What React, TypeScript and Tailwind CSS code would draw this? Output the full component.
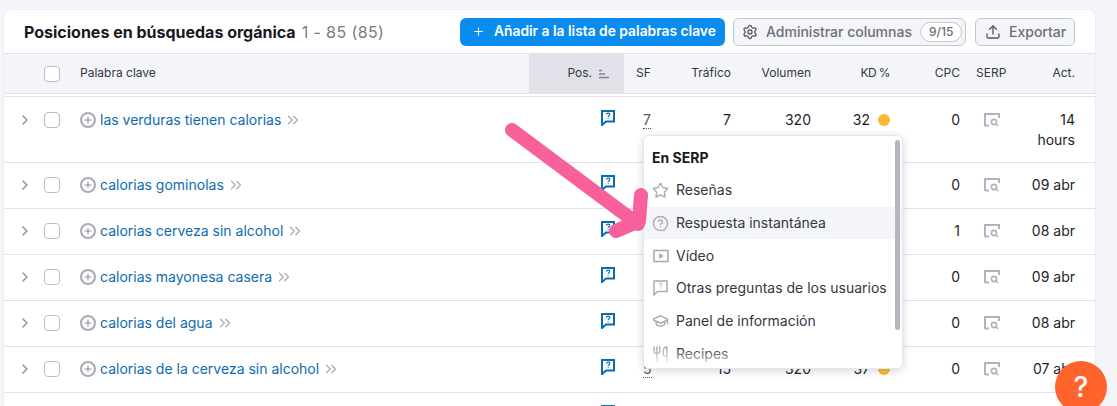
import React from "react";
import {
  ChevronRight,
  ChevronsRight,
  CircleHelp,
  GraduationCap,
  Plus,
  Settings,
  Star,
  Upload,
  Utensils,
} from "lucide-react";

type Row = {
  keyword?: string;
  sf?: string;
  traffic?: string;
  volume?: string;
  kd?: string;
  cpc?: string;
  date?: string;
};

const rows: Row[] = [
  { keyword: "las verduras tienen calorias", sf: "7", traffic: "7", volume: "320", kd: "32", cpc: "0", date: "14 hours" },
  { keyword: "calorias gominolas", cpc: "0", date: "09 abr" },
  { keyword: "calorias cerveza sin alcohol", cpc: "1", date: "08 abr" },
  { keyword: "calorias mayonesa casera", cpc: "0", date: "09 abr" },
  { keyword: "calorias del agua", cpc: "0", date: "08 abr" },
  { keyword: "calorias de la cerveza sin alcohol", sf: "5", traffic: "15", volume: "320", kd: "37", cpc: "0", date: "07 abr" },
  {},
];

const gridCols = "grid grid-cols-[76px_449px_95px_51px_56px_80px_79px_70px_56px_59px_20px]";

function Checkbox() {
  return <span className="block h-4 w-4 rounded-[4px] border border-[#b9bcc6] bg-white" />;
}

// Blue speech bubble with a question mark, used in the Pos. column
function BubbleIcon() {
  return (
    <svg width="14" height="16" viewBox="0 0 14 16" fill="none">
      <path d="M1 1h12v10.5H5L1 15z" stroke="#0a6ab4" strokeWidth="2" strokeLinejoin="miter" fill="#fff" />
      <path d="M5.3 4.6c.2-1 .9-1.5 1.8-1.5s1.7.6 1.7 1.4c0 1.2-1.7 1.3-1.7 2.4M7.1 8.2v1" stroke="#0a6ab4" strokeWidth="1.1" />
    </svg>
  );
}

function SerpIcon() {
  return (
    <svg width="16" height="14" viewBox="0 0 16 14" fill="none" stroke="#b0b3bd">
      <path d="M1 13V1h14v4" strokeWidth="2" />
      <path d="M1 12.5h4" strokeWidth="2" />
      <circle cx="10" cy="9" r="2.6" strokeWidth="1.6" />
      <path d="M12 11l2 2" strokeWidth="1.6" />
    </svg>
  );
}

function VideoIcon() {
  return (
    <svg width="16" height="14" viewBox="0 0 16 14" fill="none">
      <rect x="1" y="1.5" width="14" height="11" stroke="#a8abb5" strokeWidth="1.6" />
      <path d="M6 4.2v5.6L11 7z" fill="#a8abb5" />
    </svg>
  );
}

function QuestionsIcon() {
  return (
    <svg width="15" height="16" viewBox="0 0 15 16" fill="none">
      <path d="M1 1h13v10.5H4.5L1 15z" stroke="#a8abb5" strokeWidth="1.5" />
      <path d="M6 4.4c.2-.8.8-1.2 1.5-1.2s1.4.5 1.4 1.2c0 1-1.4 1.1-1.4 2.1M7.5 7.6v.9" stroke="#a8abb5" strokeWidth="1" />
    </svg>
  );
}

const menuItems = [
  { label: "Reseñas", icon: <Star size={17} strokeWidth={2} color="#a8abb5" /> },
  { label: "Respuesta instantánea", icon: <CircleHelp size={17} strokeWidth={2} color="#a8abb5" />, active: true },
  { label: "Vídeo", icon: <VideoIcon /> },
  { label: "Otras preguntas de los usuarios", icon: <QuestionsIcon /> },
  { label: "Panel de información", icon: <GraduationCap size={18} strokeWidth={2} color="#a8abb5" /> },
  { label: "Recipes", icon: <Utensils size={18} strokeWidth={2} color="#a8abb5" /> },
];

function HeaderCells() {
  return (
    <div className={`${gridCols} h-10 items-center border-b border-[#e0e1e9] bg-[#f4f5f9] text-xs text-[#33373f]`}>
      <div className="flex justify-end pr-5">
        <Checkbox />
      </div>
      <div className="-mt-[2px]">Palabra clave</div>
      <div className="flex h-full items-center justify-end gap-[6px] bg-[#e0e1e9] pr-[14px]">
        <span className="-mt-[2px]">Pos.</span>
        <svg width="12" height="10" viewBox="0 0 12 10" fill="none" stroke="#7f828d" strokeWidth="1.3">
          <path d="M1 1.5h3M1 5h6M1 8.5h10" />
        </svg>
      </div>
      <div className="-mt-[2px] pl-3">SF</div>
      <div className="-mt-[2px] text-right">Tráfico</div>
      <div className="-mt-[2px] text-right">Volumen</div>
      <div className="-mt-[2px] text-right tracking-[-0.6px]">KD %</div>
      <div className="-mt-[2px] text-right">CPC</div>
      <div className="-mt-[2px] pl-4">SERP</div>
      <div className="-mt-[2px] text-right">Act.</div>
      <div />
    </div>
  );
}

function TableRow({ row, first }: { row: Row; first: boolean }) {
  return (
    <div
      className={`${gridCols} border-b border-[#e0e1e9] ${first ? "pt-[13px] pb-[12px]" : "pt-[12px] pb-[13px]"} text-sm leading-5 text-[#1f2329]`}
    >
      <div className="flex h-5 items-center">
        {row.keyword && (
          <>
            <ChevronRight size={16} strokeWidth={2} color="#8b8e99" className="ml-[13px]" />
            <span className="ml-[11px]">
              <Checkbox />
            </span>
          </>
        )}
      </div>
      <div className="flex h-5 items-center">
        {row.keyword && (
          <>
            <span className="flex h-4 w-4 items-center justify-center rounded-full border-2 border-[#a8abb5]">
              <Plus size={10} strokeWidth={2.5} color="#8b8e99" />
            </span>
            <span className="ml-1 text-[#0e6bb0]">{row.keyword}</span>
            <ChevronsRight size={18} strokeWidth={1.6} color="#a8abb5" className="ml-[3px]" />
          </>
        )}
      </div>
      <div className="flex justify-end pr-[9px]">
        <BubbleIcon />
      </div>
      <div className="pl-[19px] text-[#555962]">
        {row.sf && <span className="border-b border-dotted border-[#555962]">{row.sf}</span>}
      </div>
      <div className="text-right">{row.traffic}</div>
      <div className="text-right">{row.volume}</div>
      <div className="flex h-5 items-center justify-end gap-2">
        {row.kd && (
          <>
            <span>{row.kd}</span>
            <span className="h-3 w-3 rounded-full bg-[#fbb931]" />
          </>
        )}
      </div>
      <div className="text-right">{row.cpc}</div>
      <div className="flex h-5 items-center pl-[24px]">{row.keyword && <SerpIcon />}</div>
      <div className="ml-auto w-[46px] text-right">{row.date}</div>
      <div />
    </div>
  );
}

export default function App() {
  return (
    <div className="relative h-[406px] overflow-hidden bg-[#f4f5f9] pt-[10px] pl-1 pr-[22px] font-['Inter',sans-serif]">
      <div className="rounded-t-lg bg-white ring-1 ring-[#eceef3]">
        <div className="flex h-[43px] items-center px-5">
          <h1 className="text-base font-bold text-[#17191e]">
            Posiciones en búsquedas orgánica
            <span className="ml-[6px] font-normal tracking-[0.4px] text-[#777b86]">1 - 85 (85)</span>
          </h1>
          <button className="ml-auto flex h-7 w-[265px] items-center gap-[9px] whitespace-nowrap rounded-md bg-[#0a8cee] pl-3 text-[13.8px] font-semibold text-white">
            <Plus size={13} strokeWidth={2} />
            Añadir a la lista de palabras clave
          </button>
          <button className="ml-2 flex h-7 w-[233px] items-center gap-2 whitespace-nowrap rounded-md border border-[#c4c7d0] bg-[#f4f5f9] pl-2 text-sm font-medium text-[#6c6e79]">
            <Settings size={16} strokeWidth={2} color="#555962" />
            Administrar columnas
            <span className="rounded-full border border-[#c4c7d0] bg-white px-[8px] text-xs leading-[18px]">9/15</span>
          </button>
          <button className="ml-[9px] flex h-7 w-[100px] items-center gap-2 whitespace-nowrap rounded-md border border-[#c4c7d0] bg-[#f4f5f9] pl-[9px] text-sm font-medium text-[#6c6e79]">
            <Upload size={16} strokeWidth={2} color="#555962" />
            Exportar
          </button>
        </div>
        <div className="border-t border-[#e0e1e9]">
          <HeaderCells />
          <div className="mt-[2px] border-t border-[#e0e1e9]">
            {rows.map((row, i) => (
              <TableRow key={i} row={row} first={i === 0} />
            ))}
          </div>
        </div>
      </div>

      {/* SERP features popup */}
      <div className="absolute left-[643px] top-[135px] h-[234px] w-[260px] overflow-hidden rounded-md border border-[#e6e7ec] bg-white shadow-[0_2px_8px_rgba(30,35,60,0.18)]">
        <div className="px-2 pt-[12px] text-sm font-bold leading-5 text-[#17191e]">En SERP</div>
        <div className="mt-[6px]">
          {menuItems.map((item) => (
            <div
              key={item.label}
              className={`flex h-[32.7px] items-center gap-[7px] pl-2 text-sm text-[#33373f] ${item.active ? "bg-[#f4f5f9]" : ""}`}
            >
              <span className="flex w-[17px] justify-center">{item.icon}</span>
              {item.label}
            </div>
          ))}
        </div>
        <div className="absolute inset-x-0 bottom-0 h-5 bg-gradient-to-t from-white to-transparent" />
        <div className="absolute right-[2px] top-1 h-[190px] w-[5px] rounded-full bg-[#b4b6be]" />
      </div>

      {/* Pink annotation arrow */}
      <svg className="absolute left-0 top-0" width="1117" height="406" fill="none" stroke="#f7609b" strokeWidth="14" strokeLinecap="round" strokeLinejoin="round">
        <path d="M512 130L638 224M641 195L639 221L616 231" />
      </svg>

      <div className="absolute left-[1055px] top-[361px] flex h-[52px] w-[52px] items-center justify-center rounded-full bg-[#ff642d] text-[28px] font-medium text-white">
        ?
      </div>
    </div>
  );
}
